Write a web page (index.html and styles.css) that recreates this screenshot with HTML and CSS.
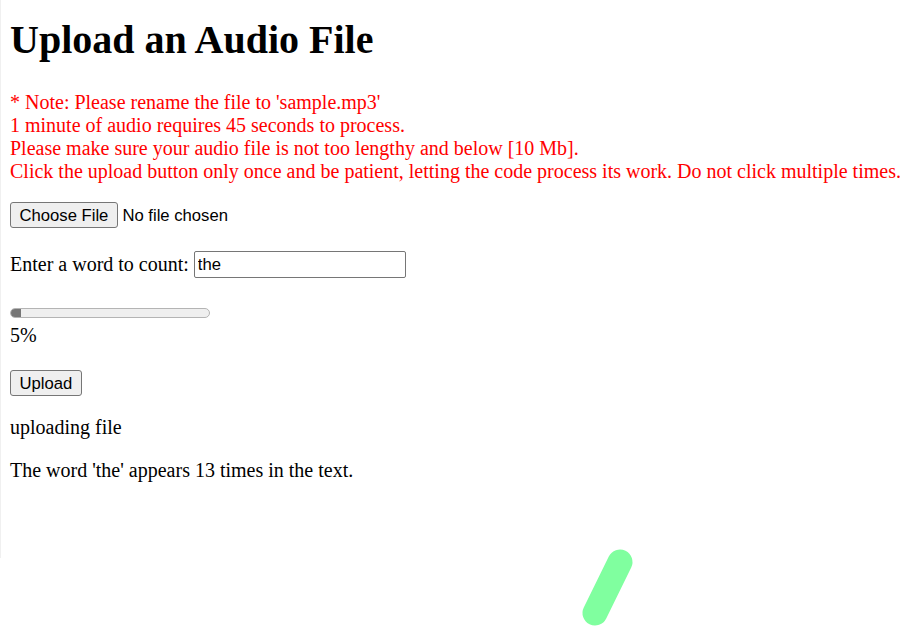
FILE: index.html
```html
<!DOCTYPE html>
<html lang="en">
<head>
<meta charset="utf-8">
<title>Upload an Audio File</title>
<link rel="stylesheet" href="styles.css">
</head>
<body>
<div class="edge"></div>
<h1 class="title">Upload an Audio File</h1>
<p class="note">* Note: Please rename the file to 'sample.mp3'<br>1 minute of audio requires 45 seconds to process.<br>Please make sure your audio file is not too lengthy and below [10 Mb].<br>Click the upload button only once and be patient, letting the code process its work. Do not click multiple times.</p>
<div class="file-row"><button class="btn" type="button">Choose File</button><span class="file-name">No file chosen</span></div>
<div class="word-row"><label class="word-label" for="word">Enter a word to count:</label><input class="word-input" id="word" type="text" value="the"></div>
<div class="progress-block">
  <div class="progress"><div class="progress-fill" style="width:5%"></div></div>
  <div class="percent">5%</div>
</div>
<div class="upload-row"><button class="btn btn-upload" type="button">Upload</button></div>
<p class="status">uploading file</p>
<p class="result">The word 'the' appears 13 times in the text.</p>
<svg class="pill" width="70" height="90" viewBox="0 0 70 90" aria-hidden="true">
  <line x1="45" y1="17" x2="20" y2="68" stroke="#80ff9f" stroke-width="25" stroke-linecap="round"/>
</svg>
</body>
</html>
```
FILE: styles.css
```css
html, body {
  background: #fff;
}
body {
  margin: 0;
  padding: 0 10px;
  font-family: "Liberation Serif", "Times New Roman", serif;
  font-size: 20px;
  line-height: 23px;
  color: #000;
}
.edge {
  position: absolute;
  left: 0;
  top: 0;
  width: 1px;
  height: 558px;
  background: #f0f0f0;
}
.title {
  font-size: 40px;
  line-height: 46px;
  font-weight: bold;
  margin: 0;
  padding-top: 17px;
  margin-bottom: 28px;
}
.note {
  color: #ff0000;
  margin: 0 0 19px;
  white-space: nowrap;
}
.btn {
  font-family: "Liberation Sans", Arial, sans-serif;
  font-size: 16.67px;
  line-height: 19px;
  color: #000;
  background: #efefef;
  border: 1px solid #767676;
  border-radius: 3px;
  padding: 2px 8.5px;
  margin: 0;
  height: 26px;
}
.file-row {
  display: flex;
  align-items: center;
  gap: 4.5px;
  height: 26px;
  margin: 0 0 23px;
}
.file-name {
  font-family: "Liberation Sans", Arial, sans-serif;
  font-size: 16.67px;
}
.word-row {
  display: flex;
  align-items: center;
  gap: 5px;
  margin: 0 0 30px;
}
.word-input {
  font-family: "Liberation Sans", Arial, sans-serif;
  font-size: 16.67px;
  width: 212px;
  height: 27px;
  box-sizing: border-box;
  border: 1px solid #767676;
  border-radius: 2px;
  padding: 1px 3px;
  margin: 0;
}
.progress {
  width: 200px;
  height: 10px;
  box-sizing: border-box;
  border: 1px solid #b4b4b4;
  border-radius: 5px;
  background: #efefef;
  overflow: hidden;
}
.progress-fill {
  height: 100%;
  background: #767676;
}
.percent {
  margin-top: 6px;
}
.upload-row {
  margin: 23px 0 0;
  height: 26px;
  display: flex;
}
.status {
  margin: 20px 0 0;
}
.result {
  margin: 20px 0 0;
}
.pill {
  position: absolute;
  left: 575px;
  top: 545px;
}
```
